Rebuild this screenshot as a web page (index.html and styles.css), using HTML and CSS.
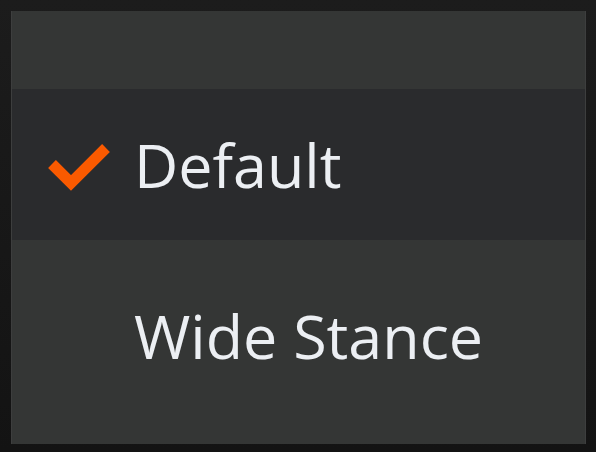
FILE: index.html
```html
<!DOCTYPE html>
<html>
<head>
<meta charset="utf-8">
<link rel="stylesheet" href="styles.css">
</head>
<body>
<div class="menu">
  <div class="spacer"></div>
  <div class="item selected">
    <span class="check">
      <svg width="62" height="52" viewBox="0 0 62 52"><path d="M4 25 L23 44 L58 9" fill="none" stroke="#fa5a00" stroke-width="11" stroke-linejoin="miter" stroke-miterlimit="10"/></svg>
    </span>
    <span class="label">Default</span>
  </div>
  <div class="item">
    <span class="check"></span>
    <span class="label">Wide Stance</span>
  </div>
</div>
</body>
</html>
```
FILE: styles.css
```css
html, body {
  margin: 0;
  padding: 0;
}
body {
  width: 596px;
  height: 452px;
  background: linear-gradient(#1c1c1c, #131313);
  padding: 11px 10px 8px 11px;
  box-sizing: border-box;
  font-family: "Open Sans", "Noto Sans", sans-serif;
}
.menu {
  width: 575px;
  height: 433px;
  background: #343635;
  border-left: 1px solid #3d3e3e;
  border-right: 1px solid #3d3e3e;
  box-sizing: border-box;
  display: flex;
  flex-direction: column;
}
.spacer {
  height: 78px;
}
.item {
  display: flex;
  align-items: center;
  height: 151px;
  color: #eceff3;
  font-size: 61px;
}
.item + .item {
  height: 190px;
}
.selected {
  background: #2a2b2d;
}
.check {
  width: 122px;
  padding-left: 36px;
  box-sizing: border-box;
  display: flex;
  align-items: center;
}
.label {
  line-height: 1;
}
```
